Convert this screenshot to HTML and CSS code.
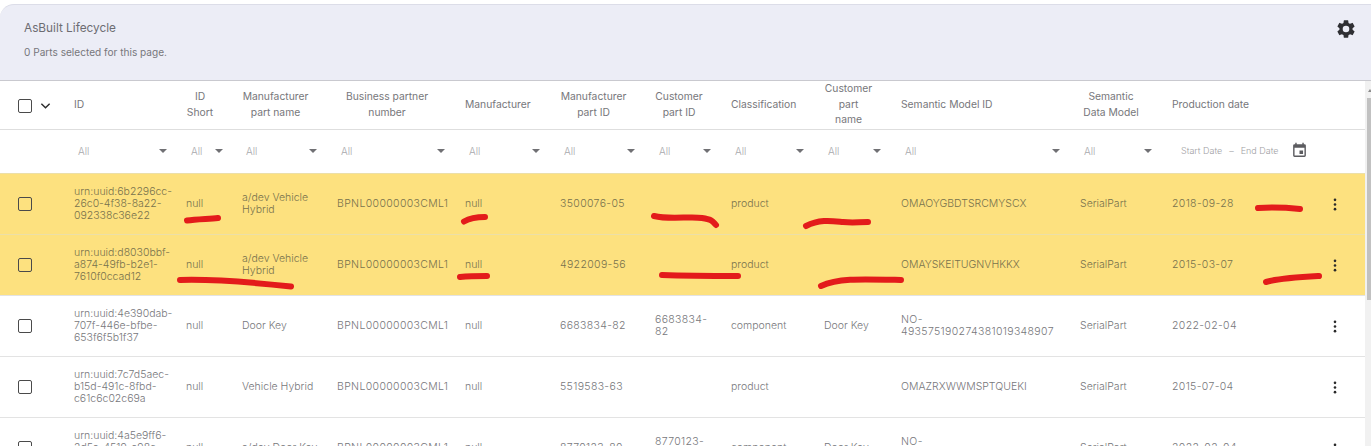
FILE: index.html
```html
<!DOCTYPE html>
<html lang="en">
<head>
<meta charset="utf-8">
<title>AsBuilt Lifecycle</title>
<link rel="stylesheet" href="styles.css">
</head>
<body>
<main class="page">
  <section class="panel">
    <div>
      <h1 class="panel-title">AsBuilt Lifecycle</h1>
      <p class="panel-sub">0 Parts selected for this page.</p>
    </div>
    <svg class="gear" viewBox="0 0 24 24"><path d="M19.14 12.94c.04-.3.06-.61.06-.94s-.02-.64-.07-.94l2.03-1.58a.49.49 0 0 0 .12-.61l-1.92-3.32a.49.49 0 0 0-.59-.22l-2.39.96a7 7 0 0 0-1.62-.94l-.36-2.54a.48.48 0 0 0-.48-.41h-3.84a.48.48 0 0 0-.47.41l-.36 2.54c-.59.24-1.13.56-1.62.94l-2.39-.96a.49.49 0 0 0-.59.22L2.74 8.87a.48.48 0 0 0 .12.61l2.03 1.58c-.05.3-.09.63-.09.94s.02.64.07.94l-2.03 1.58a.49.49 0 0 0-.12.61l1.92 3.32c.12.22.37.29.59.22l2.39-.96c.5.38 1.03.7 1.62.94l.36 2.54c.05.24.24.41.48.41h3.84c.24 0 .44-.17.47-.41l.36-2.54c.59-.24 1.13-.56 1.62-.94l2.39.96c.22.08.47 0 .59-.22l1.92-3.32a.48.48 0 0 0-.12-.61l-2.01-1.58zM12 15.6A3.6 3.6 0 1 1 12 8.4a3.6 3.6 0 0 1 0 7.2z"/></svg>
  </section>
  <div class="table-wrap">
    <table class="grid">
      <colgroup>
        <col class="c-sel"><col class="c-id"><col class="c-short"><col class="c-name"><col class="c-bpn"><col class="c-man"><col class="c-mpid"><col class="c-cpid"><col class="c-class"><col class="c-cpn"><col class="c-sem"><col class="c-model"><col class="c-date"><col class="c-act">
      </colgroup>
      <thead>
        <tr class="head">
          <th class="sel-head"><span class="check"></span><svg class="chev" viewBox="0 0 12 8"><path d="M1.5 1.5 6 6l4.5-4.5"/></svg></th>
          <th class="left">ID</th>
          <th>ID<br>Short</th>
          <th>Manufacturer<br>part name</th>
          <th>Business partner<br>number</th>
          <th class="left">Manufacturer</th>
          <th>Manufacturer<br>part ID</th>
          <th>Customer<br>part ID</th>
          <th class="left">Classification</th>
          <th class="th-three">Customer<br>part<br>name</th>
          <th class="left">Semantic Model ID</th>
          <th class="th-model">Semantic<br>Data Model</th>
          <th class="left">Production date</th>
          <th></th>
        </tr>
        <tr class="filters">
          <td></td>
          <td><div class="filter f-id"><span>All</span><i class="caret"></i></div></td>
          <td><div class="filter f-short"><span>All</span><i class="caret"></i></div></td>
          <td><div class="filter"><span>All</span><i class="caret"></i></div></td>
          <td><div class="filter"><span>All</span><i class="caret"></i></div></td>
          <td><div class="filter"><span>All</span><i class="caret"></i></div></td>
          <td><div class="filter"><span>All</span><i class="caret"></i></div></td>
          <td><div class="filter"><span>All</span><i class="caret"></i></div></td>
          <td><div class="filter"><span>All</span><i class="caret"></i></div></td>
          <td><div class="filter"><span>All</span><i class="caret"></i></div></td>
          <td><div class="filter"><span>All</span><i class="caret"></i></div></td>
          <td><div class="filter"><span>All</span><i class="caret"></i></div></td>
          <td><div class="dates"><span>Start Date</span><span class="dash">–</span><span>End Date</span><svg class="cal" viewBox="0 0 24 24"><path d="M17 12h-5v5h5v-5zM16 1v2H8V1H6v2H5a2 2 0 0 0-2 2v14a2 2 0 0 0 2 2h14a2 2 0 0 0 2-2V5a2 2 0 0 0-2-2h-1V1h-2zm3 18H5V8h14v11z"/></svg></div></td>
          <td></td>
        </tr>
      </thead>
      <tbody>
        <tr class="row hl">
          <td><span class="check"></span></td><td class="urn">urn:uuid:6b2296cc-26c0-4f38-8a22-092338c36e22</td><td>null</td><td>a/dev Vehicle Hybrid</td><td class="num">BPNL00000003CML1</td><td>null</td><td class="num">3500076-05</td><td></td><td>product</td><td></td><td>OMAOYGBDTSRCMYSCX</td><td>SerialPart</td><td class="num">2018-09-28</td><td class="act"><svg class="dots" viewBox="0 0 4 14"><circle cx="2" cy="2" r="1.4"/><circle cx="2" cy="7" r="1.4"/><circle cx="2" cy="12" r="1.4"/></svg></td>
        </tr>
        <tr class="row hl">
          <td><span class="check"></span></td><td class="urn">urn:uuid:d8030bbf-a874-49fb-b2e1-7610f0ccad12</td><td>null</td><td>a/dev Vehicle Hybrid</td><td class="num">BPNL00000003CML1</td><td>null</td><td class="num">4922009-56</td><td></td><td>product</td><td></td><td>OMAYSKEITUGNVHKKX</td><td>SerialPart</td><td class="num">2015-03-07</td><td class="act"><svg class="dots" viewBox="0 0 4 14"><circle cx="2" cy="2" r="1.4"/><circle cx="2" cy="7" r="1.4"/><circle cx="2" cy="12" r="1.4"/></svg></td>
        </tr>
        <tr class="row">
          <td><span class="check"></span></td><td class="urn">urn:uuid:4e390dab-707f-446e-bfbe-653f6f5b1f37</td><td>null</td><td>Door Key</td><td class="num">BPNL00000003CML1</td><td>null</td><td class="num">6683834-82</td><td class="num">6683834-82</td><td>component</td><td>Door Key</td><td class="num">NO-493575190274381019348907</td><td>SerialPart</td><td class="num">2022-02-04</td><td class="act"><svg class="dots" viewBox="0 0 4 14"><circle cx="2" cy="2" r="1.4"/><circle cx="2" cy="7" r="1.4"/><circle cx="2" cy="12" r="1.4"/></svg></td>
        </tr>
        <tr class="row">
          <td><span class="check"></span></td><td class="urn">urn:uuid:7c7d5aec-b15d-491c-8fbd-c61c6c02c69a</td><td>null</td><td>Vehicle Hybrid</td><td class="num">BPNL00000003CML1</td><td>null</td><td class="num">5519583-63</td><td></td><td>product</td><td></td><td>OMAZRXWWMSPTQUEKI</td><td>SerialPart</td><td class="num">2015-07-04</td><td class="act"><svg class="dots" viewBox="0 0 4 14"><circle cx="2" cy="2" r="1.4"/><circle cx="2" cy="7" r="1.4"/><circle cx="2" cy="12" r="1.4"/></svg></td>
        </tr>
        <tr class="row">
          <td><span class="check"></span></td><td class="urn">urn:uuid:4a5e9ff6-2d5a-4519-a98c-1f0e7c3b9d21</td><td>null</td><td>a/dev Door Key</td><td class="num">BPNL00000003CML1</td><td>null</td><td class="num">8770123-80</td><td class="num">8770123-80</td><td>component</td><td>Door Key</td><td class="num">NO-493575190274381019348907</td><td>SerialPart</td><td class="num">2022-02-04</td><td class="act"><svg class="dots" viewBox="0 0 4 14"><circle cx="2" cy="2" r="1.4"/><circle cx="2" cy="7" r="1.4"/><circle cx="2" cy="12" r="1.4"/></svg></td>
        </tr>
      </tbody>
    </table>
    <div class="scrollbar"><div class="thumb"></div></div>
  </div>
  <svg class="marks" viewBox="0 0 1371 446">
    <path d="M187 220.5C196 219 208 219 218 218"/>
    <path d="M180 280C215 279 250 282 291 286.5"/>
    <path d="M464 221.5C470 218 478 217 485 217"/>
    <path d="M460 277C470 276 478 276 487 276"/>
    <path d="M654 216C670 220 690 216 702 218S712 221 716 225"/>
    <path d="M662 275C690 276 715 276 738 276"/>
    <path d="M806 226C820 219 832 221 843 222S858 222 868 222"/>
    <path d="M821 286C838 278 860 279 901 280"/>
    <path d="M1258 208C1275 207 1290 208 1300 209"/>
    <path d="M1266 282C1280 278 1300 277 1319 276"/>
  </svg>
</main>
</body>
</html>
```

FILE: styles.css
```css
* { box-sizing: border-box; }
html, body { margin: 0; height: 100%; overflow: hidden; background: #fff; }
body { font-family: Inter, "Open Sans", "Liberation Sans", sans-serif; font-weight: 300; color: #7a7a7a; }
.page { position: relative; width: 1371px; height: 446px; overflow: hidden; padding-top: 4px; }
.panel {
  height: 77px;
  background: #ecedf6;
  border-top: 1px solid #dcdde8;
  border-bottom: 1px solid #c9c9cf;
  border-top-left-radius: 14px;
  padding: 14px 14px 0 24px;
  display: flex;
  justify-content: space-between;
}
.panel-title { margin: 0; font-size: 11.8px; line-height: 18px; font-weight: 400; color: #6c6c72; }
.panel-sub { margin: 7px 0 0; font-size: 10.1px; line-height: 16px; font-weight: 400; color: #77777c; }
.gear { width: 22px; height: 22px; margin-top: -1px; fill: #2f2f33; }
.table-wrap { display: flex; align-items: flex-start; }
.grid { width: 1365px; flex: none; table-layout: fixed; border-collapse: collapse; }
.c-sel { width: 64px; } .c-id { width: 112px; } .c-short { width: 56px; } .c-name { width: 95px; }
.c-bpn { width: 128px; } .c-man { width: 95px; } .c-mpid { width: 95px; } .c-cpid { width: 76px; }
.c-class { width: 93px; } .c-cpn { width: 77px; } .c-sem { width: 179px; } .c-model { width: 92px; }
.c-date { width: 153px; } .c-act { width: 50px; }
th, td { padding: 0 6px 0 10px; font-size: 10.5px; line-height: 12px; text-align: left; vertical-align: middle; font-weight: 300; }
.head th { height: 48px; line-height: 16px; text-align: center; color: #77777b; border-bottom: 1px solid #dedede; padding: 0 8px 1px 0; font-weight: 400; font-size: 10.3px; white-space: nowrap; }
.head th.left { text-align: left; padding-left: 10px; padding-right: 0; }
.head .th-model { padding-right: 10px; }
.head .th-three { line-height: 15.6px; }
.head .sel-head { text-align: left; padding: 0 0 0 18px; white-space: nowrap; }
.filters td { height: 44px; padding-right: 0; padding-bottom: 1px; }
.filter { display: flex; align-items: center; justify-content: space-between; padding: 0 10px 0 4px; color: #a8a8ac; font-size: 10px; }
.f-id { padding-right: 9px; }
.f-short { padding: 0 9px 0 5px; }
.caret { width: 0; height: 0; border-left: 4px solid transparent; border-right: 4px solid transparent; border-top: 4px solid #707074; }
.dates { display: flex; align-items: center; font-size: 9px; color: #a0a0a4; white-space: nowrap; padding-left: 9px; }
.dash { margin: 0 7px; }
.cal { width: 17px; height: 17px; margin-left: 12px; fill: #5c5c60; }
.row td { height: 61px; border-top: 1px solid #e3e3e3; color: #77777b; overflow-wrap: anywhere; }
.row td.urn { padding-right: 0; }
.row td.num { letter-spacing: .35px; }
.row.hl td { background: #fde17f; border-top-color: #ecdfa8; color: #78724d; }
.filters + .row td { border-top: none; }
.row td:first-child, .filters td:first-child { padding: 0 0 0 18px; }
.check { display: inline-block; width: 14px; height: 14px; border: 1px solid #4a4a4a; border-radius: 2px; vertical-align: middle; }
.chev { width: 11px; height: 8px; margin-left: 8px; vertical-align: middle; fill: none; stroke: #2a2a2a; stroke-width: 1.5; }
.row .act { padding: 2px 0 0 14px; }
.dots { display: block; width: 4px; height: 13px; fill: #2a2a2a; margin-left: 4px; }
.scrollbar { width: 6px; height: 365px; flex: none; background: #f1f1f1; padding: 8px 0 0 2px; }
.scrollbar::before { content: ""; display: block; width: 0; height: 0; margin-left: 1px; border-left: 2px solid transparent; border-right: 2px solid transparent; border-bottom: 3px solid #8a8a8a; }
.thumb { height: 202px; margin-top: 6px; background: #c1c1c1; }
.marks { position: absolute; inset: 0; width: 1371px; height: 446px; pointer-events: none; fill: none; stroke: #e31b1b; stroke-width: 6; stroke-linecap: round; }
```
